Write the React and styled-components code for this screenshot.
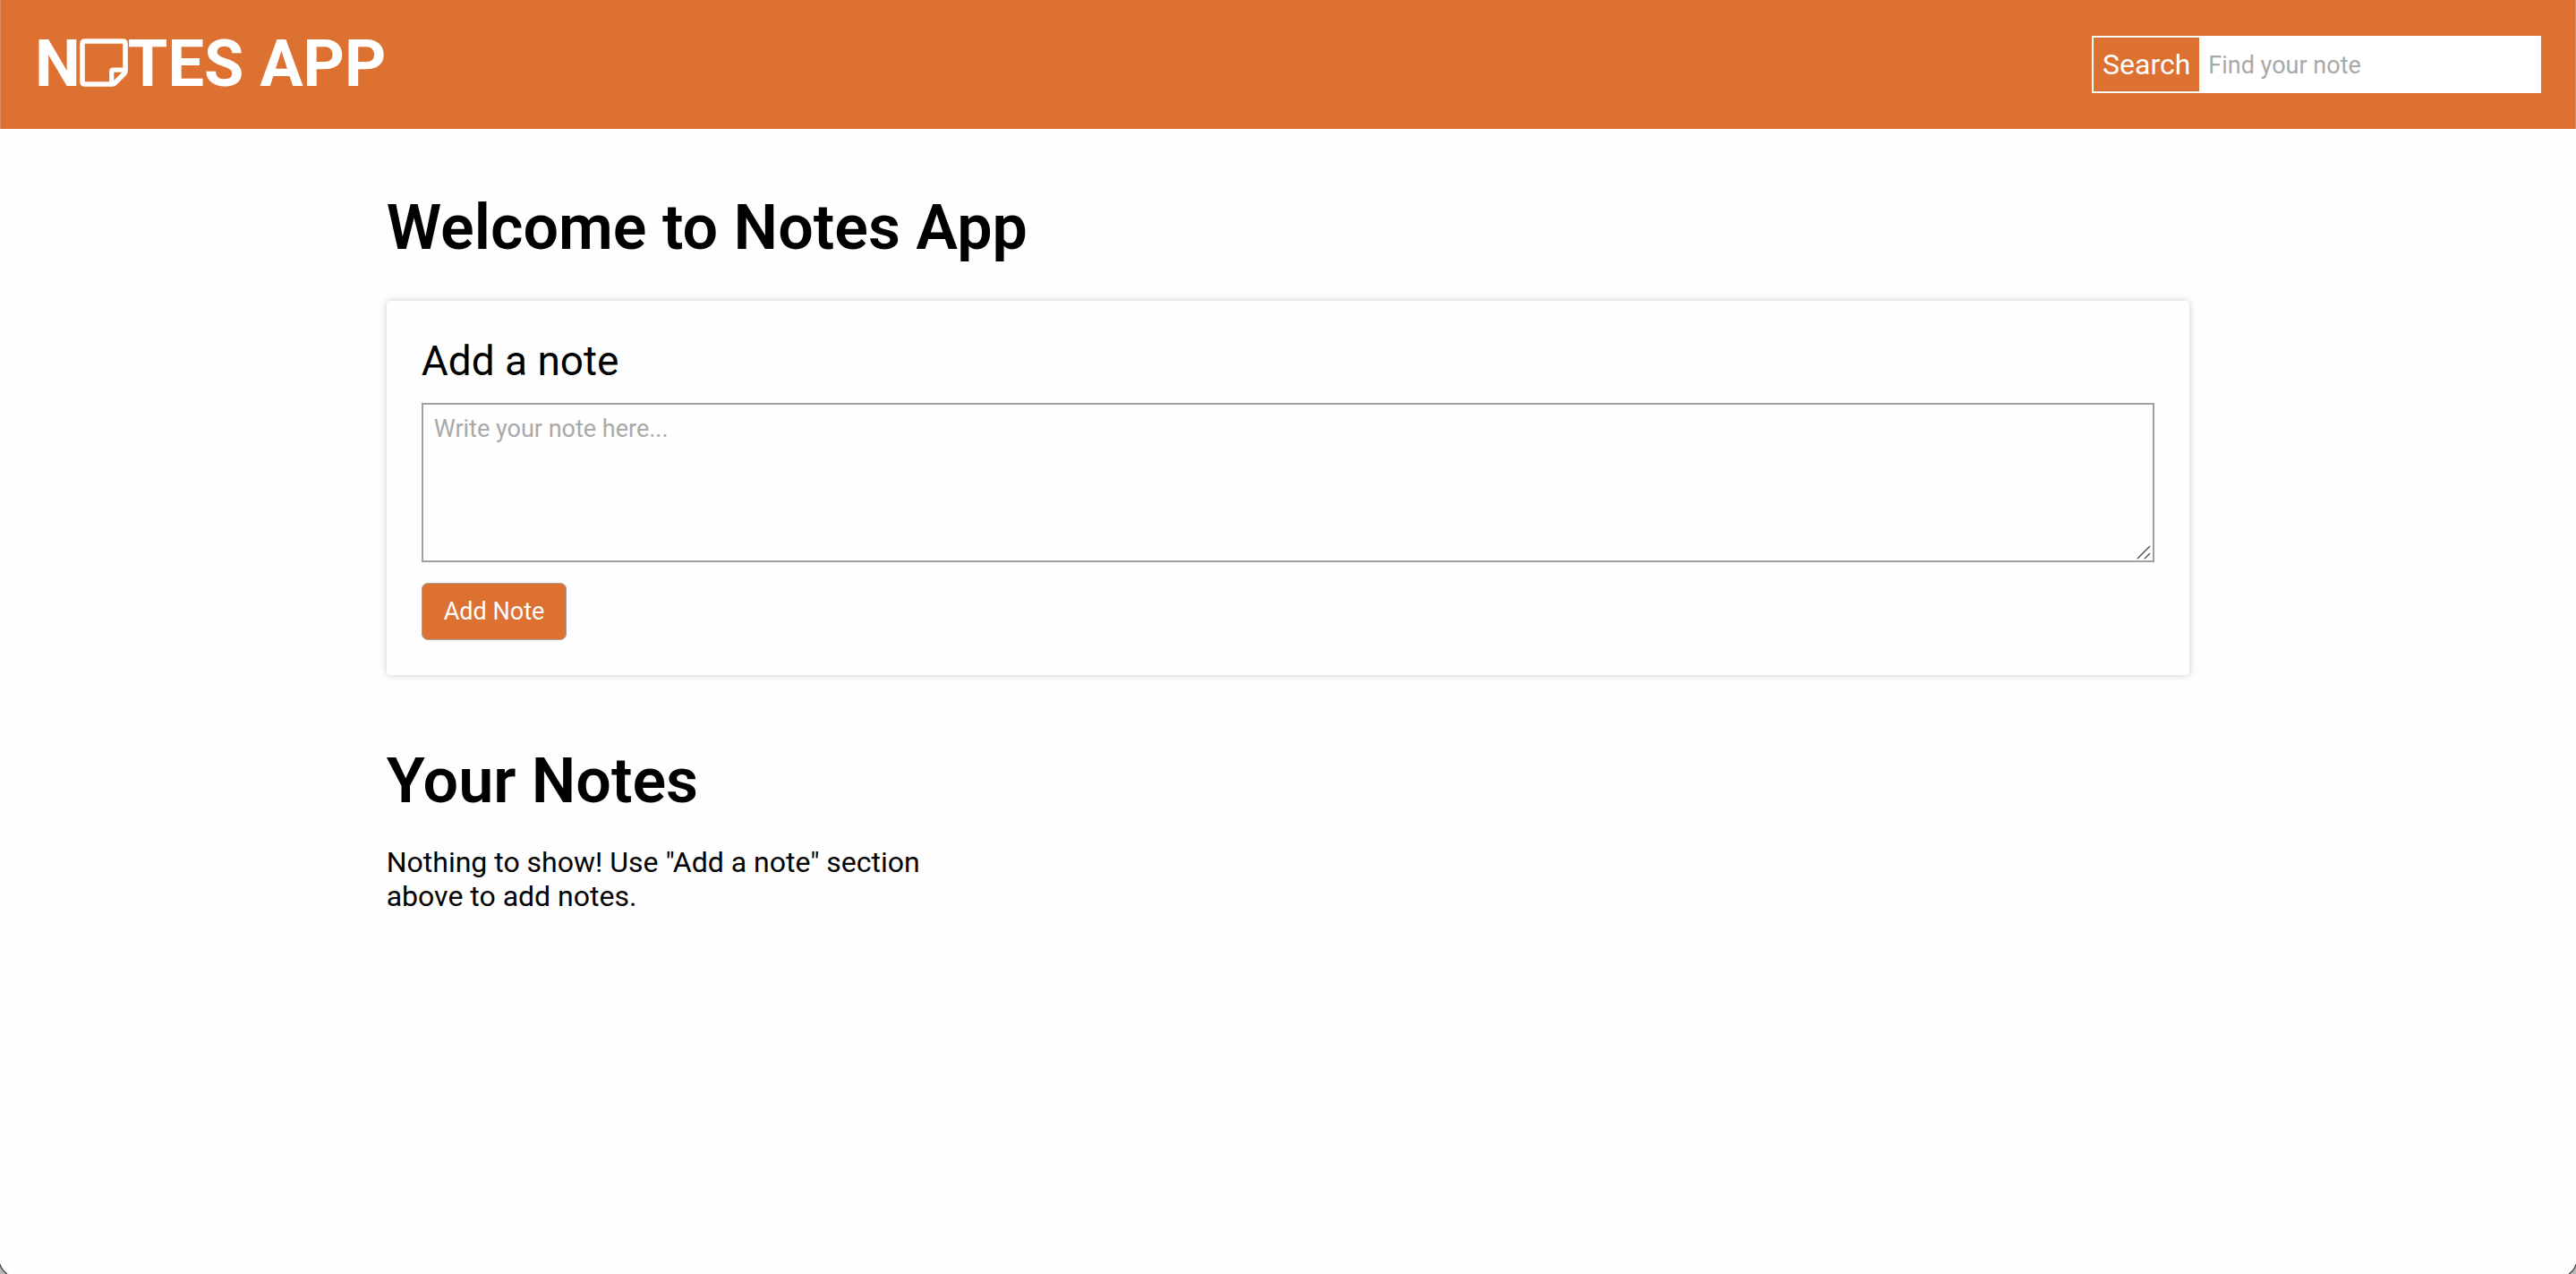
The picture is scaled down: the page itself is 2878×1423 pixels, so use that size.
import React, { useState } from "react";
import styled, { createGlobalStyle } from "styled-components";

const orange = "#dc7132";

const GlobalStyle = createGlobalStyle`
  *, *::before, *::after { box-sizing: border-box; }
  body {
    margin: 0;
    background: #fefefe;
    color: #000;
    font-family: Roboto, "Liberation Sans", sans-serif;
    font-size: 32px;
  }
  input, textarea, button { font-family: inherit; margin: 0; }
`;

const Header = styled.header`
  display: flex;
  align-items: center;
  justify-content: space-between;
  height: 144px;
  padding: 0 38px;
  background: ${orange};
  border: solid #e08e5e;
  border-width: 0 1px;
`;

const Logo = styled.a`
  display: flex;
  align-items: center;
  color: #fff;
  font-size: 72px;
  font-weight: 700;
  line-height: 84px;
  text-decoration: none;
`;

const NoteIcon = styled.svg`
  display: block;
  width: 54px;
  height: 54px;
  margin: 0 0 4px -1px;
`;

const SearchForm = styled.form`
  display: flex;
  width: 502px;
  height: 64px;
  background: #fff;
  border: 2px solid #fff;
`;

const SearchLabel = styled.label`
  display: flex;
  align-items: center;
  padding: 0 10px;
  background: ${orange};
  color: #fff;
  font-size: 32px;
`;

const SearchInput = styled.input`
  flex: 1;
  min-width: 0;
  padding: 2px 10px 0;
  border: 0;
  outline: 0;
  background: #fff;
  font-size: 27px;
  &::placeholder { color: #a9a9a9; opacity: 1; }
`;

const Main = styled.main`
  width: 70%;
  margin: 0 auto;
  padding: 68px 0;
`;

const Title = styled.h1`
  margin: 0;
  font-size: 70px;
  font-weight: 600;
  line-height: 84px;
`;

const Card = styled.form`
  margin: 40px 0 76px;
  padding: 39px;
  border-radius: 4px;
  box-shadow: 0 0 8px rgba(0, 0, 0, 0.2);
`;

const CardLabel = styled.label`
  display: block;
  margin-bottom: 19px;
  font-size: 46px;
  line-height: 56px;
`;

const NoteField = styled.div`
  position: relative;
  margin-bottom: 23px;
`;

const NoteText = styled.textarea`
  display: block;
  width: 100%;
  height: 178px;
  padding: 11px 12px;
  border: 2px solid #a0a0a0;
  border-radius: 0;
  outline: 0;
  resize: none;
  background: #fefefe;
  font-size: 27px;
  line-height: 32px;
  &::placeholder { color: #a9a9a9; opacity: 1; }
`;

const Grip = styled.svg`
  position: absolute;
  right: 4px;
  bottom: 3px;
  width: 16px;
  height: 16px;
  pointer-events: none;
`;

const AddButton = styled.button`
  display: block;
  height: 64px;
  padding: 0 24px;
  border: 1px solid #a9a096;
  border-radius: 7px;
  background: ${orange};
  color: #fff;
  font-size: 27px;
`;

const Empty = styled.p`
  max-width: 640px;
  margin: 30px 0 0;
  font-size: 32px;
  line-height: 38px;
`;

const Corner = styled.svg`
  position: fixed;
  bottom: 0;
  ${(p) => (p.$side === "left" ? "left: 0;" : "right: 0; transform: scaleX(-1);")}
  width: 12px;
  height: 12px;
`;

function WindowCorner({ side }) {
  return (
    <Corner $side={side} viewBox="0 0 12 12" aria-hidden="true">
      <path d="M0 1Q1.500 7.500 8 12H0Z" fill="#b9b9b9" />
      <path d="M0 1Q1.500 7.500 8 12" fill="none" stroke="#444" strokeWidth="1.300" />
    </Corner>
  );
}

export default function App() {
  const [query, setQuery] = useState("");
  const [note, setNote] = useState("");
  return (
    <>
      <GlobalStyle />
      <Header>
        <Logo href="#" aria-label="Notes App">
          N
          <NoteIcon viewBox="0 0 54 54" aria-hidden="true" fill="none" stroke="#fff">
            <path
              d="M6 3H48Q51 3 51 6V36.500Q51 38 50 39L39 50Q38 51 36.500 51H6Q3 51 3 48V6Q3 3 6 3Z"
              strokeWidth="5.600"
            />
            <path d="M35.700 51V37Q35.700 35.200 37.500 35.200H51" strokeWidth="5.200" />
          </NoteIcon>
          <span>TES APP</span>
        </Logo>
        <SearchForm role="search" onSubmit={(e) => e.preventDefault()}>
          <SearchLabel htmlFor="search">Search</SearchLabel>
          <SearchInput
            id="search"
            placeholder="Find your note"
            value={query}
            onChange={(e) => setQuery(e.target.value)}
          />
        </SearchForm>
      </Header>
      <Main>
        <Title>Welcome to Notes App</Title>
        <Card onSubmit={(e) => e.preventDefault()}>
          <CardLabel htmlFor="note">Add a note</CardLabel>
          <NoteField>
            <NoteText
              id="note"
              placeholder="Write your note here..."
              value={note}
              onChange={(e) => setNote(e.target.value)}
            />
            <Grip viewBox="0 0 16 16" aria-hidden="true" stroke="#555" strokeWidth="1.500">
              <path d="M1 15L15 1M9 15L15 9" />
            </Grip>
          </NoteField>
          <AddButton type="submit">Add Note</AddButton>
        </Card>
        <Title as="h2">Your Notes</Title>
        <Empty>Nothing to show! Use "Add a note" section above to add notes.</Empty>
      </Main>
      <WindowCorner side="left" />
      <WindowCorner side="right" />
    </>
  );
}
